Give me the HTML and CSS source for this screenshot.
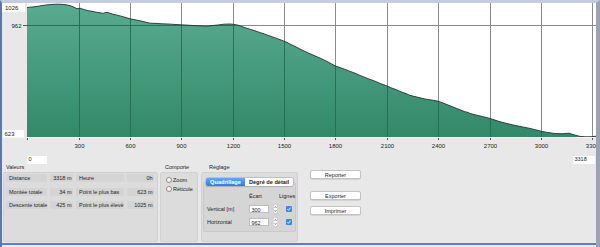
FILE: index.html
```html
<!DOCTYPE html>
<html lang="fr">
<head>
  <meta charset="UTF-8">
  <title>Profil d'altitude</title>
  <link rel="stylesheet" href="styles.css">
</head>
<body>
<div class="window">

  <svg class="chart" width="594" height="150" viewBox="2 3 594 150">
    <defs>
      <linearGradient id="fillGrad" x1="0" y1="0" x2="0" y2="1">
        <stop offset="0" stop-color="#58ab8f"/>
        <stop offset="1" stop-color="#33886a"/>
      </linearGradient>
      <clipPath id="fillClip">
        <polygon id="profileShape" points="27,7.5 32,7 38,6.3 44,5.2 50,4.6 56,4.2 62,4.3 66,4.8 70,5.6 74,7.2 77,8.8 80,8.2 84,9.6 88,10.7 92,11.3 96,12.2 100,12.8 103,13.4 106,12.4 108,12.6 112,14 117,15.2 122,16.4 126,17.6 130,18.8 135,19.8 140,20.8 145,22 150,23.2 156,23.4 162,23.8 168,24 174,24.4 181,24.8 188,25.2 194,25.6 200,25.8 206,26.2 212,25.6 218,25 224,24.2 230,24 234,24.4 238,25.2 242,26.6 246,28 250,29.2 255,30.8 260,32.6 265,34.2 270,36 276,38.2 282,40.4 287,42.4 292,45 297,47.4 302,50 307,52.4 312,54.6 317,56.8 322,59 327,61.4 331,63.6 335,65.8 340,67.6 345,69.4 350,71.4 355,73.2 360,75.4 365,77.4 370,79.4 375,81.2 380,83.4 386,85.6 391,87.8 396,89.6 401,91.8 406,93.6 410,95.4 415,96.6 420,97.8 425,99 430,99.8 434,100.4 438,101.2 442,102.6 446,104.2 450,105.8 455,107.8 460,109.8 465,111.8 468,112.4 470,113.4 475,114.8 480,116 485,117.2 489,118.2 494,119.8 499,121.4 504,122.8 509,124 514,125.2 519,126.2 524,127.2 529,128.2 534,129.4 538,130.4 542,131.4 546,132.2 550,132.8 554,133.4 558,133.6 562,133.8 566,133.4 569,133.2 572,134.2 576,135.4 580,136.4 585,136.8 590,136.8 593,136.6 596,136.2 596,137 27,137"/>
      </clipPath>
      <g id="grid">
        <line x1="79.5" y1="3" x2="79.5" y2="137"/>
        <line x1="130.5" y1="3" x2="130.5" y2="137"/>
        <line x1="181.5" y1="3" x2="181.5" y2="137"/>
        <line x1="233.5" y1="3" x2="233.5" y2="137"/>
        <line x1="284.5" y1="3" x2="284.5" y2="137"/>
        <line x1="335.5" y1="3" x2="335.5" y2="137"/>
        <line x1="387.5" y1="3" x2="387.5" y2="137"/>
        <line x1="438.5" y1="3" x2="438.5" y2="137"/>
        <line x1="490.5" y1="3" x2="490.5" y2="137"/>
        <line x1="541.5" y1="3" x2="541.5" y2="137"/>
        <line x1="592.5" y1="3" x2="592.5" y2="137"/>
        <line x1="27" y1="25.5" x2="596" y2="25.5"/>
      </g>
    </defs>

    <!-- plot background -->
    <rect x="27" y="3" width="569" height="134" fill="#fff"/>
    <use href="#grid" stroke="#8c8c8c" stroke-width="1"/>

    <!-- elevation profile -->
    <use href="#profileShape" fill="url(#fillGrad)"/>
    <use href="#grid" stroke="#2b6f52" stroke-width="1" clip-path="url(#fillClip)"/>
    <polyline class="profile-line" points="27,7.5 32,7 38,6.3 44,5.2 50,4.6 56,4.2 62,4.3 66,4.8 70,5.6 74,7.2 77,8.8 80,8.2 84,9.6 88,10.7 92,11.3 96,12.2 100,12.8 103,13.4 106,12.4 108,12.6 112,14 117,15.2 122,16.4 126,17.6 130,18.8 135,19.8 140,20.8 145,22 150,23.2 156,23.4 162,23.8 168,24 174,24.4 181,24.8 188,25.2 194,25.6 200,25.8 206,26.2 212,25.6 218,25 224,24.2 230,24 234,24.4 238,25.2 242,26.6 246,28 250,29.2 255,30.8 260,32.6 265,34.2 270,36 276,38.2 282,40.4 287,42.4 292,45 297,47.4 302,50 307,52.4 312,54.6 317,56.8 322,59 327,61.4 331,63.6 335,65.8 340,67.6 345,69.4 350,71.4 355,73.2 360,75.4 365,77.4 370,79.4 375,81.2 380,83.4 386,85.6 391,87.8 396,89.6 401,91.8 406,93.6 410,95.4 415,96.6 420,97.8 425,99 430,99.8 434,100.4 438,101.2 442,102.6 446,104.2 450,105.8 455,107.8 460,109.8 465,111.8 468,112.4 470,113.4 475,114.8 480,116 485,117.2 489,118.2 494,119.8 499,121.4 504,122.8 509,124 514,125.2 519,126.2 524,127.2 529,128.2 534,129.4 538,130.4 542,131.4 546,132.2 550,132.8 554,133.4 558,133.6 562,133.8 566,133.4 569,133.2 572,134.2 576,135.4 580,136.4 585,136.8 590,136.8 593,136.6 596,136.2"/>

    <!-- x axis -->
    <line x1="27" y1="137.5" x2="596" y2="137.5" stroke="#f6f6f6"/>
    <g class="ticks">
      <line x1="27.5" y1="138" x2="27.5" y2="140"/>
      <line x1="79.5" y1="138" x2="79.5" y2="140"/>
      <line x1="130.5" y1="138" x2="130.5" y2="140"/>
      <line x1="181.5" y1="138" x2="181.5" y2="140"/>
      <line x1="233.5" y1="138" x2="233.5" y2="140"/>
      <line x1="284.5" y1="138" x2="284.5" y2="140"/>
      <line x1="335.5" y1="138" x2="335.5" y2="140"/>
      <line x1="387.5" y1="138" x2="387.5" y2="140"/>
      <line x1="438.5" y1="138" x2="438.5" y2="140"/>
      <line x1="490.5" y1="138" x2="490.5" y2="140"/>
      <line x1="541.5" y1="138" x2="541.5" y2="140"/>
      <line x1="592.5" y1="138" x2="592.5" y2="140"/>
      <line x1="23" y1="25.5" x2="27" y2="25.5"/>
    </g>
    <g class="axis-label" text-anchor="middle">
      <text x="79.5" y="148">300</text>
      <text x="130.5" y="148">600</text>
      <text x="181.5" y="148">900</text>
      <text x="233.5" y="148">1200</text>
      <text x="284.5" y="148">1500</text>
      <text x="335.5" y="148">1800</text>
      <text x="387.5" y="148">2100</text>
      <text x="438.5" y="148">2400</text>
      <text x="490.5" y="148">2700</text>
      <text x="541.5" y="148">3000</text>
      <text x="592.5" y="148">3300</text>
    </g>

    <!-- y axis -->
    <rect x="2" y="3" width="23" height="9" fill="#fff"/>
    <text class="axis-label" x="5" y="10">1026</text>
    <text class="axis-label" x="21.5" y="27.5" text-anchor="end">962</text>
    <rect x="3" y="130" width="21" height="7.5" fill="#fff"/>
    <text class="axis-label" x="4.5" y="136">623</text>
  </svg>

  <div class="range">
    <span class="range-box start">0</span>
    <span class="range-box end">3318</span>
  </div>

  <div class="panel">
    <div class="group values">
      <div class="group-title">Valeurs</div>
      <div class="group-box">
        <div class="values-grid">
          <span class="cell">Distance</span>
          <span class="cell num">3318 m</span>
          <span class="cell">Heure</span>
          <span class="cell num">0h</span>

          <span class="cell">Montée totale</span>
          <span class="cell num">34 m</span>
          <span class="cell">Point le plus bas</span>
          <span class="cell num">623 m</span>

          <span class="cell">Descente totale</span>
          <span class="cell num">425 m</span>
          <span class="cell">Point le plus élevé</span>
          <span class="cell num">1025 m</span>
        </div>
      </div>
    </div>

    <div class="group behaviour">
      <div class="group-title">Comporte</div>
      <div class="group-box">
        <div class="radio-list">
          <label class="radio"><span class="radio-dot"></span>Zoom</label>
          <label class="radio"><span class="radio-dot"></span>Réticule</label>
        </div>
      </div>
    </div>

    <div class="group settings">
      <div class="group-title">Réglage</div>
      <div class="group-box">
        <div class="seg">
          <span class="seg-item on">Quadrillage</span>
          <span class="seg-item">Degré de détail</span>
        </div>
        <div class="tab-box">
          <div class="grid-form">
            <span></span>
            <span class="col-head">Écart</span>
            <span></span>
            <span class="col-head lines">Lignes</span>

            <span class="form-label">Vertical [m]</span>
            <span class="field">300</span>
            <svg class="stepper" width="5" height="10" viewBox="0 0 5 10">
              <rect x="0.25" y="0.25" width="4.5" height="9.5" rx="2.2" fill="#fff" stroke="#aaa" stroke-width="0.5"/>
              <path d="M1.5 3.8 L2.5 2.5 L3.5 3.8 M1.5 6.2 L2.5 7.5 L3.5 6.2" fill="none" stroke="#444" stroke-width="0.6"/>
            </svg>
            <svg class="check" width="6" height="6" viewBox="0 0 6 6">
              <rect width="6" height="6" rx="1" fill="#3b86f4"/>
              <path d="M1.4 3.1 L2.5 4.3 L4.6 1.6" fill="none" stroke="#fff" stroke-width="0.9"/>
            </svg>

            <span class="form-label">Horizontal</span>
            <span class="field">962</span>
            <svg class="stepper" width="5" height="10" viewBox="0 0 5 10">
              <rect x="0.25" y="0.25" width="4.5" height="9.5" rx="2.2" fill="#fff" stroke="#aaa" stroke-width="0.5"/>
              <path d="M1.5 3.8 L2.5 2.5 L3.5 3.8 M1.5 6.2 L2.5 7.5 L3.5 6.2" fill="none" stroke="#444" stroke-width="0.6"/>
            </svg>
            <svg class="check" width="6" height="6" viewBox="0 0 6 6">
              <rect width="6" height="6" rx="1" fill="#3b86f4"/>
              <path d="M1.4 3.1 L2.5 4.3 L4.6 1.6" fill="none" stroke="#fff" stroke-width="0.9"/>
            </svg>
          </div>
        </div>
      </div>
    </div>

    <div class="actions">
      <button class="btn">Reporter</button>
      <button class="btn export">Exporter</button>
      <button class="btn print">Imprimer</button>
    </div>
  </div>

  <div class="window-foot"></div>
</div>
</body>
</html>
```

FILE: styles.css
```css
* {
  box-sizing: border-box;
}

body {
  margin: 0;
  background: #e8e8e8;
  font-family: "Liberation Sans", Arial, sans-serif;
  font-size: 5.5px;
  color: #1d1d1d;
}

.window {
  width: 600px;
  height: 247px;
  border-top: 3px solid #c4cde0;
  border-left: 2px solid #5d76ad;
  border-right: 4px solid #9aa3b8;
  overflow: hidden;
}

/* chart */
.chart {
  display: block;
}

.profile-line {
  fill: none;
  stroke: #25322c;
  stroke-width: 0.9;
}

.ticks line {
  stroke: #555;
  stroke-width: 1;
}

.axis-label {
  font-family: "Liberation Sans", Arial, sans-serif;
  font-size: 6px;
  fill: #222;
}

/* range boxes under the chart */
.range {
  display: flex;
  justify-content: space-between;
  height: 12px;
  padding: 3px 1px 0 25px;
}

.range-box {
  background: #fff;
  height: 7.5px;
  line-height: 7.5px;
  padding-left: 1.5px;
}

.range-box.start {
  width: 20px;
}

.range-box.end {
  width: 22px;
}

/* bottom panel */
.panel {
  display: flex;
  height: 78px;
}

.group {
  display: flex;
  flex-direction: column;
}

.group-title {
  height: 7px;
  line-height: 5px;
}

.group-box {
  height: 70px;
  background: #dcdcdc;
  border: 1px solid #d1d1d1;
  border-radius: 2px;
}

.values {
  margin-left: 1px;
  width: 155px;
}

.values .group-title {
  padding-left: 3px;
}

.values-grid {
  display: grid;
  grid-template-columns: 41px 23px 48px 27px;
  grid-auto-rows: 8px;
  column-gap: 3px;
  row-gap: 5.5px;
  padding: 1px 0 0 2px;
}

.cell {
  background: #d4d4d4;
  border-radius: 1px;
  line-height: 8px;
  padding: 0 2px 0 3px;
  white-space: nowrap;
}

.cell.num {
  text-align: right;
  padding: 0 1.5px 0 0;
}

.behaviour {
  margin-left: 2px;
  width: 38px;
}

.behaviour .group-title {
  padding-left: 5px;
}

.radio-list {
  display: flex;
  flex-direction: column;
  padding: 2px 0 0 4.5px;
}

.radio {
  display: flex;
  align-items: center;
  gap: 1.5px;
  height: 9px;
}

.radio-dot {
  width: 6px;
  height: 6px;
  border-radius: 50%;
  background: linear-gradient(#fff, #ebebeb);
  border: 0.5px solid #8f8f8f;
}

.settings {
  margin-left: 3px;
  width: 97px;
}

.settings .group-title {
  padding-left: 8px;
}

.settings .group-box {
  padding: 5px 0 0 1px;
}

.seg {
  position: relative;
  z-index: 1;
  display: flex;
  width: 87px;
  height: 8px;
  margin-left: 3px;
  border-radius: 2px;
  box-shadow: 0 0 0 0.5px #a9a9a9, 0 0.5px 1px rgba(0, 0, 0, 0.15);
  font-size: 5.6px;
  font-weight: bold;
  overflow: hidden;
}

.seg-item {
  width: 48px;
  line-height: 8px;
  text-align: center;
  background: #fff;
  white-space: nowrap;
}

.seg-item.on {
  width: 39px;
  background: linear-gradient(#63a6fb, #2d7cf1);
  color: #fff;
}

.tab-box {
  width: 93px;
  height: 50px;
  margin-top: -4px;
  background: #d5d5d5;
  border: 1px solid #c9c9c9;
  border-radius: 2px;
}

.grid-form {
  display: grid;
  grid-template-columns: 38px 20px 5px 6px;
  grid-auto-rows: 8px;
  column-gap: 4px;
  row-gap: 5px;
  align-items: center;
  padding: 8.5px 0 0 3px;
}

.col-head {
  white-space: nowrap;
  line-height: 8px;
}

.col-head.lines {
  margin-left: -3px;
}

.form-label {
  white-space: nowrap;
}

.field {
  height: 8px;
  line-height: 8px;
  background: #fff;
  border: 0.5px solid #bdbdbd;
  padding-left: 1.5px;
}

.stepper {
  display: block;
}

.check {
  display: block;
  margin-left: 4px;
}

.actions {
  display: flex;
  flex-direction: column;
  width: 51px;
  margin-left: 12px;
  padding-top: 5px;
}

.btn {
  height: 9px;
  padding: 0;
  background: #fff;
  border: 0.5px solid #c3c3c3;
  border-radius: 2px;
  box-shadow: 0 0.5px 0.5px rgba(0, 0, 0, 0.18);
  font-family: inherit;
  font-size: 5.5px;
  line-height: 8px;
  color: #1d1d1d;
}

.btn.export {
  margin-top: 12px;
}

.btn.print {
  margin-top: 6px;
}

.window-foot {
  height: 4px;
  border-top: 2px solid #5b7fce;
  background: #eceef4;
}
```
